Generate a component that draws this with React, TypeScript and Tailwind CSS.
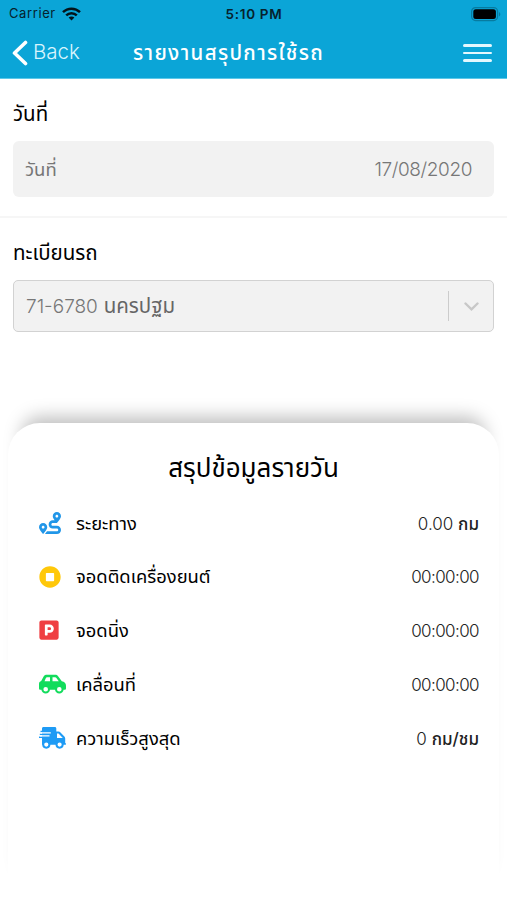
import React from "react"
import { FaParking, FaRoute, FaStopCircle } from "react-icons/fa"

function CarIcon() {
    return (
        <svg width="27" height="20" viewBox="0 0 27 20">
            <path d="M8 .8h8.2c1.2 0 2.1.4 2.9 1.4l3.7 5c2.6.5 4.2 2 4.2 4.5v2.5c0 1-.6 1.6-1.5 1.6H1.5C.6 15.800 0 15.200 0 14.200V10c0-1.500.9-2.500 2.200-2.900L4.500 2.700C5.200 1.400 6.300.8 8 .8z" fill="currentColor" />
            <path d="M8 3.300h3V7.200H5.500l1.400-3.100c.2-.5.600-.8 1.100-.8zM13.500 3.300h2.700c.4 0 .7.200 1 .5l2.600 3.400h-6.300z" fill="white" />
            <circle cx="6.700" cy="15.300" r="3.300" fill="white" stroke="currentColor" strokeWidth="2" />
            <circle cx="20.300" cy="15.300" r="3.300" fill="white" stroke="currentColor" strokeWidth="2" />
        </svg>
    )
}

function TruckIcon() {
    return (
        <svg width="27" height="22" viewBox="0 0 27 22">
            <path d="M4.500 0h11.300c.9 0 1.500.6 1.500 1.500v3h2.200c.8 0 1.400.3 2 .9l3.900 4c.5.600.800 1.200.800 2V16c.5 0 .8.400.8.900s-.3.900-.8.900H3V1.500C3 .6 3.600 0 4.500 0z" fill="currentColor" />
            <path d="M18 6.500h1.500l4.300 4.500H18z" fill="white" />
            <path d="M1.500 4.500h10M.8 7.400h10M0 10.300h9.500" stroke="currentColor" strokeWidth="1.400" />
            <path d="M1.500 5.900h10.300M.8 8.900h9.700" stroke="white" strokeWidth="1.100" />
            <circle cx="7.300" cy="17.600" r="3.100" fill="white" stroke="currentColor" strokeWidth="2" />
            <circle cx="20.600" cy="17.600" r="3.100" fill="white" stroke="currentColor" strokeWidth="2" />
        </svg>
    )
}

const rows = [
    { icon: <FaRoute size={22} />, color: "text-[#2196e8]", label: "ระยะทาง", value: "0.00", valueClass: "", unit: "กม" },
    { icon: <FaStopCircle size={22} />, color: "text-[#ffc80a]", label: "จอดติดเครื่องยนต์", value: "00:00:00", valueClass: "tracking-[-0.6px]", unit: "" },
    { icon: <FaParking className="-ml-px" size={22} />, color: "text-[#ef3e42]", label: "จอดนิ่ง", value: "00:00:00", valueClass: "tracking-[-0.6px]", unit: "" },
    { icon: <CarIcon />, color: "text-[#12dc5c]", label: "เคลื่อนที่", value: "00:00:00", valueClass: "tracking-[-0.6px]", unit: "" },
    { icon: <TruckIcon />, color: "text-[#1e9bf5]", label: "ความเร็วสูงสุด", value: "0", valueClass: "", unit: "กม/ชม" },
]

function StatusBar() {
    return (
        <div className="h-7 pl-[9px] pr-[6px] flex items-center justify-between text-[13px] text-[#06222d]">
            <div className="w-[120px] flex items-center gap-[6px]">
                <span className="tracking-[0.6px]">Carrier</span>
                <svg width="19" height="14" viewBox="0 0 19 14" fill="none" stroke="#03141b" strokeWidth="2.5">
                    <path d="M1 5.2C5.8 .5 13.2 .5 18 5.2" />
                    <path d="M4.2 8.4c3-2.9 7.6-2.9 10.6 0" />
                    <path d="M9.5 13.4 6.6 10.5c1.6-1.5 4.2-1.5 5.8 0z" fill="#03141b" stroke="none" />
                </svg>
            </div>
            <span className="mr-[2px] text-[13.5px] font-semibold tracking-[0.7px] whitespace-nowrap">5:10 PM</span>
            <div className="w-[120px] flex justify-end">
                <svg width="30" height="15" viewBox="0 0 30 15">
                    <rect x=".6" y=".6" width="26" height="13" rx="4" fill="none" stroke="#077ba0" strokeWidth="1.2" />
                    <rect x="2.3" y="2.3" width="22.6" height="9.6" rx="2.5" fill="#000" />
                    <path d="M28 5v4.4c1.8-.9 1.8-3.5 0-4.4z" fill="#077ba0" />
                </svg>
            </div>
        </div>
    )
}

function Header() {
    return (
        <div className="h-[79px] bg-[#0ba5d7] border-b border-[#5cc8e9]">
            <StatusBar />
            <div className="h-[50px] pl-3 pr-[15px] flex items-center text-white">
                <svg width="16" height="26" viewBox="0 0 16 26" fill="none" stroke="currentColor" strokeWidth="3.6" strokeLinecap="round" strokeLinejoin="round">
                    <path d="M13.5 2.5 2.5 13l11 10.5" />
                </svg>
                <span className="ml-[5px] mt-[-2px] w-[100px] text-[20.5px] font-light text-[#d8f4fd]">Back</span>
                <span className="flex-1 text-[20.5px] font-medium tracking-[1.35px] whitespace-nowrap">รายงานสรุปการใช้รถ</span>
                <div className="w-[29px] flex flex-col gap-[5px]">
                    <div className="h-[2.5px] rounded-full bg-[#e4f8fe]" />
                    <div className="h-[2.5px] rounded-full bg-[#e4f8fe]" />
                    <div className="h-[2.5px] rounded-full bg-[#e4f8fe]" />
                </div>
            </div>
        </div>
    )
}

export default function App() {
    return (
        <div className="w-full h-[900px] flex flex-col overflow-hidden bg-white text-black font-[Inter,'Noto_Sans_Thai','Noto_Sans',sans-serif]">
            <Header />
            <div className="h-[139px] px-[13px] border-b-2 border-[#f6f6f6]">
                <div className="h-[62px] pt-[21px] text-[20.5px] leading-7">วันที่</div>
                <div className="h-14 pl-3 pr-[22px] flex items-center justify-between rounded-[6px] bg-[#f2f2f2] text-[#777]">
                    <span className="pt-px text-[18.5px]">วันที่</span>
                    <span className="pt-[2px] text-[19px] font-light tracking-[-0.4px]">17/08/2020</span>
                </div>
            </div>
            <div className="h-[205px] px-[13px]">
                <div className="h-[62px] pt-[21px] text-[20.5px] leading-7">ทะเบียนรถ</div>
                <div className="h-[52px] pl-3 flex items-center rounded-[5px] border-[1.5px] border-[#d2d2d2] bg-[#f2f2f2] text-[20.5px] text-[#777]">
                    <span className="flex-1 pt-px"><span className="text-[19px] font-light">71-6780</span> <span className="text-[#666]">นครปฐม</span></span>
                    <div className="h-[30px] w-px bg-[#ccc]" />
                    <div className="w-11 flex justify-center">
                        <svg width="15" height="9" viewBox="0 0 15 9" fill="none" stroke="#c8c8c8" strokeWidth="2.4" strokeLinecap="round">
                            <path d="M1.5 1.5l6 5.8 6-5.8" />
                        </svg>
                    </div>
                </div>
            </div>
            <div className="mx-2 flex-1 rounded-t-[32px] bg-white shadow-[0_-20px_18px_-14px_rgba(0,0,0,0.26)]">
                <div className="h-[73px] pt-[27px] text-center text-[26px] leading-9">สรุปข้อมูลรายวัน</div>
                {rows.map((row) => (
                    <div key={row.label} className="h-[53.8px] pl-[30.5px] pr-5 flex items-center text-[17px]">
                        <div className={`w-[37.5px] ${row.color}`}>{row.icon}</div>
                        <span className="flex-1 pt-px text-[18.4px]">{row.label}</span>
                        <span className="pt-[3px] text-[#222]">
                            <span className={`font-light ${row.valueClass}`}>{row.value}</span> <span className="font-medium">{row.unit}</span>
                        </span>
                    </div>
                ))}
            </div>
        </div>
    )
}
